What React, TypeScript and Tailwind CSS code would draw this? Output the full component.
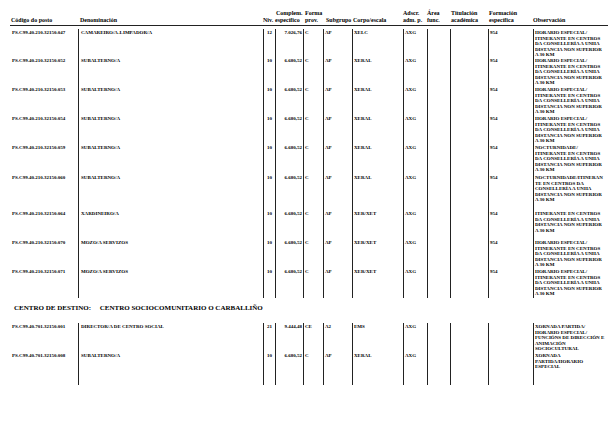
import React from "react";

const cols =
  "grid grid-cols-[67px_185px_12px_28px_20px_29px_51px_24px_23px_38px_45px_72px]";

type Row = {
  code: string;
  name: string;
  niv: string;
  comp: string;
  forma: string;
  sub: string;
  corpo: string;
  adscr: string;
  form: string;
  obs: string[];
  h: string;
};

const itin = [
  "HORARIO ESPECIAL/",
  "ITINERANTE EN CENTROS",
  "DA CONSELLERÍA A UNHA",
  "DISTANCIA NON SUPERIOR",
  "A 30 KM",
];

const nocturn = [
  "NOCTURNIDADE/",
  "ITINERANTE EN CENTROS",
  "DA CONSELLERÍA A UNHA",
  "DISTANCIA NON SUPERIOR",
  "A 30 KM",
];

const sub = (code: string, h: string, obs: string[], name = "SUBALTERNO/A", corpo = "XERAL"): Row => ({
  code,
  name,
  niv: "10",
  comp: "6.680,52",
  forma: "C",
  sub: "AP",
  corpo,
  adscr: "AXG",
  form: "954",
  obs,
  h,
});

const group1: Row[] = [
  {
    code: "PS.C99.40.210.32150.047",
    name: "CAMAREIRO/A-LIMPADOR/A",
    niv: "12",
    comp: "7.026,76",
    forma: "C",
    sub: "AP",
    corpo: "XELC",
    adscr: "AXG",
    form: "954",
    obs: itin,
    h: "h-[28px]",
  },
  sub("PS.C99.40.210.32150.052", "h-[29px]", itin),
  sub("PS.C99.40.210.32150.053", "h-[29px]", itin),
  sub("PS.C99.40.210.32150.054", "h-[29px]", itin),
  sub("PS.C99.40.210.32150.059", "h-[30px]", nocturn),
  sub("PS.C99.40.210.32150.060", "h-[36px]", [
    "NOCTURNIDADE/ITINERAN",
    "TE EN CENTROS DA",
    "CONSELLERÍA A UNHA",
    "DISTANCIA NON SUPERIOR",
    "A 30 KM",
  ]),
  sub("PS.C99.40.210.32150.064", "h-[29px]", itin.slice(1), "XARDINEIRO/A", "XER/XET"),
  sub("PS.C99.40.210.32150.070", "h-[29px]", itin, "MOZO/A SERVIZOS", "XER/XET"),
  sub("PS.C99.40.210.32150.071", "h-[30px]", itin, "MOZO/A SERVIZOS", "XER/XET"),
];

const group2: Row[] = [
  {
    code: "PS.C99.40.701.32150.001",
    name: "DIRECTOR/A DE CENTRO SOCIAL",
    niv: "21",
    comp: "9.444,48",
    forma: "CE",
    sub: "A2",
    corpo: "EMS",
    adscr: "AXG",
    form: "",
    obs: [
      "XORNADA PARTIDA/",
      "HORARIO ESPECIAL/",
      "FUNCIÓNS DE DIRECCIÓN E",
      "ANIMACIÓN",
      "SOCIOCULTURAL",
    ],
    h: "h-[29px]",
  },
  {
    code: "PS.C99.40.701.32150.008",
    name: "SUBALTERNO/A",
    niv: "10",
    comp: "6.680,52",
    forma: "C",
    sub: "AP",
    corpo: "XERAL",
    adscr: "AXG",
    form: "",
    obs: ["XORNADA", "PARTIDA/HORARIO", "ESPECIAL"],
    h: "h-[33px]",
  },
];

const line = "border-l border-[#222]";

const DataRow = ({ r }: { r: Row }) => (
  <div className={`${cols} ${r.h} text-[5px] leading-[5.5px]`}>
    <div className="pl-[1px] pt-[1px] whitespace-nowrap">{r.code}</div>
    <div className={`${line} pl-[2px] pt-[1px] whitespace-nowrap`}>{r.name}</div>
    <div className={`${line} pt-[1px] text-center`}>{r.niv}</div>
    <div className={`${line} pt-[1px] pr-[1px] text-right whitespace-nowrap`}>{r.comp}</div>
    <div className={`${line} pl-[1px] pt-[1px]`}>{r.forma}</div>
    <div className={`${line} pl-[1px] pt-[1px]`}>{r.sub}</div>
    <div className={`${line} pl-[1px] pt-[1px]`}>{r.corpo}</div>
    <div className={`${line} pl-[1px] pt-[1px]`}>{r.adscr}</div>
    <div className={line}></div>
    <div className={line}></div>
    <div className={`${line} pl-[1px] pt-[1px]`}>{r.form}</div>
    <div className={`${line} pl-[1px] pt-[1px]`}>
      {r.obs.map((o) => (
        <div key={o} className="whitespace-nowrap">
          {o}
        </div>
      ))}
    </div>
  </div>
);

export default function App() {
  return (
    <div className="w-[615px] h-[439px] bg-white text-black font-bold font-['Liberation_Serif',serif] overflow-hidden">
      <div className="pt-[10px] pl-[10px]">
        <div className={`${cols} w-[598px] items-end border-b border-[#222] pb-[1px] pl-[1px] text-[6px] leading-[7px]`}>
          <div>Código do posto</div>
          <div className="pl-[2px]">Denominación</div>
          <div className="whitespace-nowrap">Niv.</div>
          <div className="whitespace-nowrap">
            <div className="pl-[1px]">Complem.</div>
            <div>específico</div>
          </div>
          <div className="pl-[2px]">
            <div>Forma</div>
            <div>prov.</div>
          </div>
          <div className="pl-[3px]">Subgrupo</div>
          <div className="pl-[1px] whitespace-nowrap">Corpo/escala</div>
          <div>
            <div>Adscr.</div>
            <div className="whitespace-nowrap">adm. p.</div>
          </div>
          <div>
            <div>Área</div>
            <div>func.</div>
          </div>
          <div className="pl-[1px]">
            <div>Titulación</div>
            <div>académica</div>
          </div>
          <div className="pl-[1px]">
            <div>Formación</div>
            <div>específica</div>
          </div>
          <div>Observación</div>
        </div>
      </div>

      <div className="pl-[11px] pt-[3px]">
        {group1.map((r) => (
          <DataRow key={r.code} r={r} />
        ))}
      </div>

      <div className="pl-[14px] pt-[6px] pb-[11px] text-[7px] leading-[8px] whitespace-pre">
        {"CENTRO DE DESTINO:     CENTRO SOCIOCOMUNITARIO O CARBALLIÑO"}
      </div>

      <div className="pl-[11px]">
        {group2.map((r) => (
          <DataRow key={r.code} r={r} />
        ))}
      </div>
    </div>
  );
}
